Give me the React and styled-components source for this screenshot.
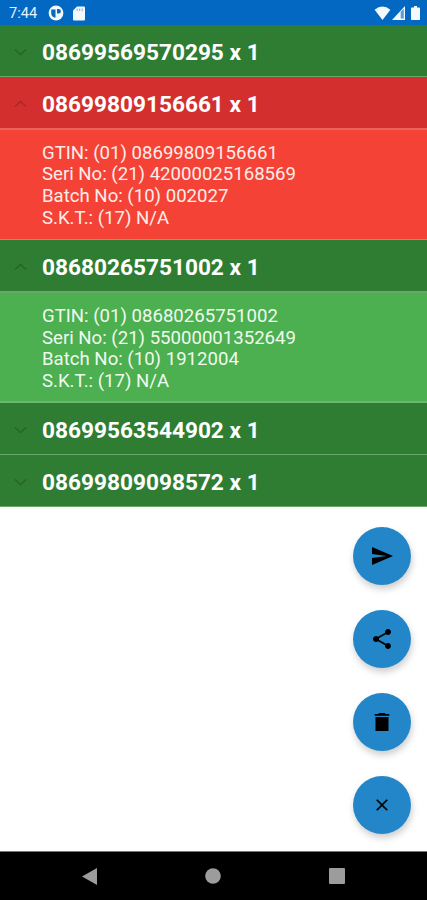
import React, { useState } from "react";
import styled, { createGlobalStyle } from "styled-components";

const GlobalStyle = createGlobalStyle`
  * {
    box-sizing: border-box;
  }

  body {
    margin: 0;
    background: #fff;
    font-family: Roboto, "Liberation Sans", sans-serif;
  }

  button {
    border: 0;
    padding: 0;
    font: inherit;
  }
`;

const Screen = styled.div`
  display: flex;
  flex-direction: column;
  width: 100%;
  height: 900px;
  overflow: hidden;
`;

const StatusBar = styled.div`
  display: flex;
  align-items: center;
  flex: none;
  height: 25px;
  padding: 1px 7px 0 9px;
  background: #0268c2;
  color: #e6f1fb;
  font-size: 14.6px;

  svg {
    display: block;
    fill: #f4f9fd;
  }
`;

const Clock = styled.span`
  width: 39px;
`;

const Notifications = styled.div`
  display: flex;
  align-items: center;
  gap: 9px;
  flex: 1;
`;

const Signals = styled.div`
  display: flex;
  align-items: center;
`;

const BatteryIcon = styled.svg`
  margin-left: 5px;
`;

const List = styled.div`
  flex: none;
`;

const ItemHeader = styled.button`
  display: flex;
  align-items: center;
  width: 100%;
  height: ${(props) => (props.$open ? "52.5px" : "52px")};
  padding: ${(props) => (props.$open ? "4px" : "3px")} 0 0 13px;
  background: ${(props) => (props.$error ? "#d32f2f" : "#2e7d32")};
  border-bottom: ${(props) => (props.$open ? "2px" : "1px")} solid
    ${(props) => (props.$error ? "#ec625c" : "#68a76b")};
  color: #fff;
  font-size: 22.65px;
  font-weight: 700;
  text-align: left;

  svg {
    flex: none;
    margin-right: 14px;
    stroke: ${(props) => (props.$error ? "#a82727" : "#246528")};
    transform: ${(props) => (props.$open ? "rotate(180deg)" : "none")};
  }
`;

const ItemDetails = styled.div`
  height: 110.7px;
  padding: 13.4px 0 0 42px;
  background: ${(props) => (props.$error ? "#f44336" : "#4caf50")};
  border-bottom: ${(props) => (props.$error ? "1px" : "2px")} solid
    ${(props) => (props.$error ? "#c08a62" : "#6fb672")};
  color: ${(props) => (props.$error ? "#ffece9" : "#effaef")};
  font-size: 18.6px;
  line-height: 21.6px;
`;

const Actions = styled.div`
  display: flex;
  flex-direction: column;
  align-items: flex-end;
  justify-content: flex-end;
  flex: 1;
  gap: 25px;
  padding: 0 16px 17px;
`;

const ActionButton = styled.button`
  display: flex;
  align-items: center;
  justify-content: center;
  width: 58px;
  height: 58px;
  border-radius: 50%;
  background: #2286c8;
  box-shadow: 1px 4px 7px rgba(0, 0, 0, 0.2);
`;

const NavBar = styled.div`
  display: flex;
  align-items: center;
  justify-content: space-between;
  flex: none;
  height: 49px;
  padding: 0 82px;
  background: #000;
  border-top: 1px solid #777;

  svg {
    display: block;
    fill: #9c9c9c;
  }
`;

const items = [
  { gtin: "08699569570295" },
  {
    gtin: "08699809156661",
    serial: "42000025168569",
    batch: "002027",
    error: true,
  },
  { gtin: "08680265751002", serial: "55000001352649", batch: "1912004" },
  { gtin: "08699563544902" },
  { gtin: "08699809098572" },
];

const actions = [
  { name: "Send", size: 24, path: "M2.01 21 23 12 2.01 3 2 10l15 2-15 2z" },
  {
    name: "Share",
    size: 24,
    path: "M18 16.08c-.76 0-1.44.3-1.96.77L8.91 12.7c.05-.23.09-.46.09-.7s-.04-.47-.09-.7l7.05-4.11c.54.5 1.25.81 2.04.81 1.66 0 3-1.34 3-3s-1.34-3-3-3-3 1.34-3 3c0 .24.04.47.09.7L8.04 9.81C7.5 9.31 6.79 9 6 9c-1.66 0-3 1.34-3 3s1.34 3 3 3c.79 0 1.5-.31 2.04-.81l7.12 4.16c-.05.21-.08.43-.08.65 0 1.61 1.31 2.92 2.92 2.92s2.92-1.31 2.92-2.92-1.31-2.92-2.92-2.92z",
  },
  {
    name: "Delete",
    size: 24,
    path: "M5.5 7v14h13V7zM19.3 4h-3.6l-1-1H9.3l-1 1H4.7v1.8h14.6V4z",
  },
  {
    name: "Close",
    size: 20,
    path: "M19 6.41 17.59 5 12 10.59 6.41 5 5 6.41 10.59 12 5 17.59 6.41 19 12 13.41 17.59 19 19 17.59 13.41 12z",
  },
];

function Item({ item }) {
  const [open, setOpen] = useState(Boolean(item.serial));

  return (
    <div>
      <ItemHeader
        $error={item.error}
        $open={open}
        onClick={() => setOpen(!open)}
      >
        <svg width="15" height="14" viewBox="0 0 15 14" fill="none">
          <path d="M2 4.5 7.5 9.5 13 4.5" strokeWidth="1.3" />
        </svg>
        {item.gtin} x 1
      </ItemHeader>
      {open && (
        <ItemDetails $error={item.error}>
          <div>GTIN: (01) {item.gtin}</div>
          <div>Seri No: (21) {item.serial || "N/A"}</div>
          <div>Batch No: (10) {item.batch || "N/A"}</div>
          <div>S.K.T.: (17) N/A</div>
        </ItemDetails>
      )}
    </div>
  );
}

function App() {
  return (
    <Screen>
      <GlobalStyle />
      <StatusBar>
        <Clock>7:44</Clock>
        <Notifications>
          <svg width="16" height="16" viewBox="0 0 16 16">
            <circle cx="8" cy="8" r="7.4" />
            <path
              d="M3.2 4.6h4.3v8.2A5 5 0 0 1 3.2 8zM9 4h1.6a2.3 2.3 0 0 1 0 4.6H9z"
              fill="#0268c2"
            />
          </svg>
          <svg width="12" height="15" viewBox="0 0 12 15">
            <path d="M4 .5h7a1 1 0 0 1 1 1v12a1 1 0 0 1-1 1H1a1 1 0 0 1-1-1v-9z" />
            <path d="M4.2 2.5v2.6M6.7 2.5v2.6M9.2 2.5v2.6" stroke="#7baedb" />
          </svg>
        </Notifications>
        <Signals>
          <svg width="17" height="14" viewBox="0 0 17 14">
            <path d="M.6 3.8Q8.5-3 16.4 3.8L8.5 14z" />
          </svg>
          <svg width="15" height="14" viewBox="0 0 15 14">
            <path d="M1 14 14 0v14z" />
            <path d="M9.7 5.8 12.8 2.7V12.5H9.7z" fill="#5a9bd8" />
          </svg>
          <BatteryIcon width="9" height="14" viewBox="0 0 9 14">
            <path d="M3 0h3v1.5h2.2a.8.8 0 0 1 .8.8v11a.7.7 0 0 1-.7.7H.7a.7.7 0 0 1-.7-.7v-11a.8.8 0 0 1 .8-.8H3z" />
          </BatteryIcon>
        </Signals>
      </StatusBar>

      <List>
        {items.map((item) => (
          <Item key={item.gtin} item={item} />
        ))}
      </List>

      <Actions>
        {actions.map((action) => (
          <ActionButton key={action.name} aria-label={action.name}>
            <svg width={action.size} height={action.size} viewBox="0 0 24 24">
              <path d={action.path} />
            </svg>
          </ActionButton>
        ))}
      </Actions>

      <NavBar>
        <svg width="15" height="17" viewBox="0 0 15 17">
          <path d="M0 8.5 15 0v17z" />
        </svg>
        <svg width="16" height="16" viewBox="0 0 16 16">
          <circle cx="8" cy="8" r="7.8" />
        </svg>
        <svg width="16" height="16" viewBox="0 0 16 16">
          <rect width="16" height="16" rx="1" />
        </svg>
      </NavBar>
    </Screen>
  );
}

export default App;
